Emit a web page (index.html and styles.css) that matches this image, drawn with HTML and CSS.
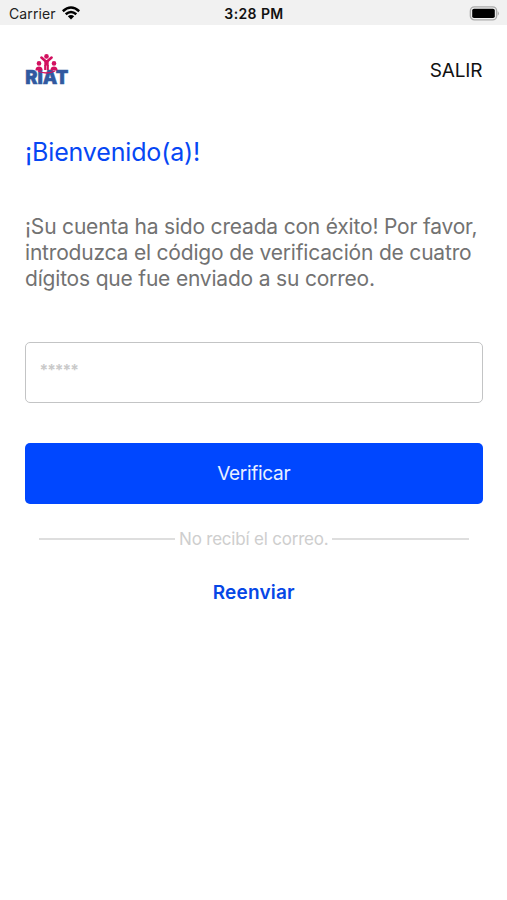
FILE: index.html
```html
<!DOCTYPE html>
<html lang="es">
<head>
<meta charset="utf-8">
<title>RIAT</title>
<link rel="stylesheet" href="styles.css">
</head>
<body>
<div class="status">
  <div class="carrier"><span>Carrier</span>
    <svg class="wifi" width="18" height="14" viewBox="0 0 18 14"><g fill="none" stroke="#000" stroke-width="2.5"><path d="M.8 5.2Q9-2.2 17.2 5.2"/><path d="M3.7 8.3Q9 3.6 14.3 8.3"/></g><path d="M5.8 10.2Q9 7.6 12.2 10.2L9 13.6Z"/></svg>
  </div>
  <div class="time">3:28 PM</div>
  <svg class="battery" width="31" height="15" viewBox="0 0 31 15"><rect x="1.4" y=".9" width="26.2" height="13" rx="4" fill="#f1f1f1" stroke="#aaa" stroke-width="1.4"/><rect x="3.2" y="2.7" width="22.6" height="9.4" rx="1.8"/><path d="M28.7 5Q31.2 7.4 28.7 9.8Z" fill="#aaa"/></svg>
</div>
<header class="bar">
  <svg class="logo" width="46" height="38" viewBox="0 0 46 38">
    <text class="logo-text" x="1.3" y="31.4" textLength="43" lengthAdjust="spacingAndGlyphs">RIAT</text>
    <g fill="#d2105f"><circle cx="22.5" cy="3.4" r="2.3"/><circle cx="15" cy="10.4" r="2.3"/><circle cx="30" cy="10.4" r="2.3"/><path d="M11.6 17.4V16.2Q12 13.5 15 13.5T18.4 16.2V17.4Z"/><path d="M26.6 17.4V16.2Q27 13.5 30 13.5T33.4 16.2V17.4Z"/></g>
    <g fill="none" stroke="#d2105f"><path stroke-width="2.6" stroke-linecap="round" d="M17.4 4.6L22.5 9L27.6 4.6"/><path stroke-width="4.4" d="M22.5 8V12.6"/><path stroke-width="2.1" d="M21.2 12V17M23.8 12V17"/><path stroke-width="1.3" d="M14 18Q22.5 22 31 18"/></g>
  </svg>
  <a class="exit">SALIR</a>
</header>
<main class="content">
  <h1 class="title">¡Bienvenido(a)!</h1>
  <p class="message">¡Su cuenta ha sido creada con éxito! Por favor,<br>introduzca el código de verificación de cuatro<br>dígitos que fue enviado a su correo.</p>
  <div class="field">*****</div>
  <button class="submit">Verificar</button>
  <div class="divider"><span>No recibí el correo.</span></div>
  <a class="resend">Reenviar</a>
</main>
</body>
</html>
```
FILE: styles.css
```css
* { box-sizing: border-box; }
body { margin: 0; height: 900px; background: #fff; color: #111; font-family: Inter, "Liberation Sans", sans-serif; overflow: hidden; }
.status { display: grid; grid-template-columns: 1fr auto 1fr; align-items: center; height: 25px; padding: 0 7px 0 9px; background: #f1f1f1; }
.carrier { display: flex; align-items: center; gap: 6px; font-size: 14px; line-height: 25px; padding-top: 1px; letter-spacing: .1px; color: #222; }
.wifi { margin-top: -2px; }
.time { font-size: 14px; font-weight: 600; line-height: 25px; padding-top: 1px; letter-spacing: .4px; margin-left: -1px; }
.battery { justify-self: end; margin-top: 1px; }
.bar { display: flex; justify-content: space-between; align-items: center; height: 90px; padding: 0 24.5px 0 24px; }
.logo { margin-top: 3px; }
.logo-text { font-size: 19px; font-weight: 900; fill: #3159a0; stroke: #3159a0; stroke-width: .5px; }
.exit { font-size: 19px; letter-spacing: -.1px; }
.content { display: flex; flex-direction: column; padding: 0 24.5px 0 25px; }
.title { margin: 21px 0 0; font-size: 25px; line-height: 32px; font-weight: 400; letter-spacing: -.15px; color: #0647f4; }
.message { margin: 46px 0 0; font-size: 21px; line-height: 26.2px; letter-spacing: -.19px; color: #727272; white-space: nowrap; }
.field { height: 61px; margin-top: 49.4px; padding: 0 13.5px; border: 1.5px solid #c3c4c5; border-radius: 5px; font-size: 15.5px; font-weight: 700; line-height: 55px; letter-spacing: -1px; color: #c9c9c9; }
.submit { height: 61px; margin-top: 40px; padding: 0; border: 0; border-radius: 5px; background: #0047ff; color: #e9f0ff; font: 400 19px Inter, sans-serif; letter-spacing: -.3px; }
.divider { display: flex; align-items: center; gap: 4px; margin: 23px 14px 0; font-size: 17px; line-height: 24px; letter-spacing: -.2px; color: #cecece; white-space: nowrap; }
.divider::before, .divider::after { content: ""; flex: 1; height: 2px; background: #dedede; }
.resend { margin-top: 30px; align-self: center; font-size: 19px; line-height: 24px; font-weight: 600; letter-spacing: .2px; color: #0647e6; }
```
